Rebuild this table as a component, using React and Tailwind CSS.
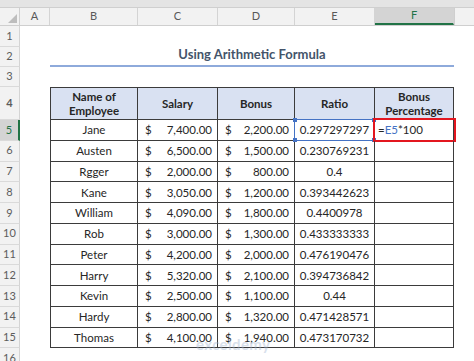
import React from 'react';

const cols = [
  { key: 'A', w: 'w-[30px]' },
  { key: 'B', w: 'w-[88px]' },
  { key: 'C', w: 'w-[80px]' },
  { key: 'D', w: 'w-[77px]' },
  { key: 'E', w: 'w-[80px]' },
  { key: 'F', w: 'w-[79px]' },
];

const rows = [
  ['Jane', '7,400.00', '2,200.00', '0.297297297'],
  ['Austen', '6,500.00', '1,500.00', '0.230769231'],
  ['Rgger', '2,000.00', '800.00', '0.4'],
  ['Kane', '3,050.00', '1,200.00', '0.393442623'],
  ['William', '4,090.00', '1,800.00', '0.4400978'],
  ['Rob', '3,000.00', '1,300.00', '0.433333333'],
  ['Peter', '4,200.00', '2,000.00', '0.476190476'],
  ['Harry', '5,320.00', '2,100.00', '0.394736842'],
  ['Kevin', '2,500.00', '1,100.00', '0.44'],
  ['Hardy', '2,800.00', '1,320.00', '0.471428571'],
  ['Thomas', '4,100.00', '1,940.00', '0.473170732'],
];

const RowHead = ({ n, active }) => (
  <div
    className={`w-[20px] shrink-0 flex items-center justify-center text-[11px] border-b border-[#dadada] ${
      active
        ? 'bg-[#d4d4d4] text-[#217346] border-r-2 border-r-[#217346]'
        : 'bg-[#f2f2f2] text-[#5c5c5c] border-r border-r-[#d4d4d4]'
    }`}
  >
    {n}
  </div>
);

const cellBase = 'shrink-0 border-r border-b border-[#3b3b3b] flex items-center';

function Money({ v, w }) {
  return (
    <div className={`${cellBase} ${w} justify-between pl-[7px] pr-[5px]`}>
      <span>$</span>
      <span>{v}</span>
    </div>
  );
}

function Corner({ cls }) {
  return <span className={`absolute w-[4px] h-[4px] bg-[#4472c4] ${cls}`} />;
}

export default function App() {
  return (
    <div
      className="w-[474px] h-[361px] overflow-hidden bg-white text-[#262626] relative"
      style={{ fontFamily: 'Lato, "Noto Sans", sans-serif' }}
    >
      {/* top strip */}
      <div className="h-[8px] bg-[#e4e4e4] border-b border-[#cfcfcf]" />

      {/* column headers */}
      <div className="flex h-[18px] bg-[#f2f2f2] border-b border-[#cfcfcf] text-[11px] text-[#595959]">
        <div className="w-[20px] shrink-0 border-r border-[#cfcfcf] relative">
          <svg className="absolute right-[2px] bottom-[2px]" width="9" height="9" viewBox="0 0 9 9">
            <polygon points="9,0 9,9 0,9" fill="#bdbdbd" />
          </svg>
        </div>
        {cols.map((c) => (
          <div
            key={c.key}
            className={`${c.w} shrink-0 flex items-center justify-center border-r border-[#d4d4d4] ${
              c.key === 'F' ? 'bg-[#d4d4d4] text-[#217346] border-b-2 border-b-[#217346]' : ''
            }`}
          >
            {c.key}
          </div>
        ))}
        <div className="flex-1 border-l border-[#cfcfcf]" />
      </div>

      {/* row 1 */}
      <div className="flex h-[21px]">
        <RowHead n={1} />
      </div>

      {/* row 2: title */}
      <div className="flex h-[20px]">
        <RowHead n={2} />
        <div className="w-[30px] shrink-0" />
        <div className="w-[404px] shrink-0 border-b-2 border-[#8eaadb] flex items-end justify-center pb-[1px] text-[13px] font-bold text-[#44546a]">
          Using Arithmetic Formula
        </div>
      </div>

      {/* row 3 */}
      <div className="flex h-[20px]">
        <RowHead n={3} />
      </div>

      {/* row 4: table header */}
      <div className="flex h-[33px] text-[11.5px] font-bold leading-[14px]">
        <RowHead n={4} />
        <div className="w-[30px] shrink-0" />
        <div className={`${cellBase} w-[88px] border-t border-l justify-center text-center bg-[#d9e1f2]`}>
          Name of<br />Employee
        </div>
        <div className={`${cellBase} w-[80px] border-t justify-center bg-[#d9e1f2]`}>Salary</div>
        <div className={`${cellBase} w-[77px] border-t justify-center bg-[#d9e1f2]`}>Bonus</div>
        <div className={`${cellBase} w-[80px] border-t justify-center bg-[#d9e1f2]`}>Ratio</div>
        <div className={`${cellBase} w-[79px] border-t justify-center text-center bg-[#d9e1f2]`}>
          Bonus<br />Percentage
        </div>
      </div>

      {/* data rows */}
      {rows.map((r, i) => (
        <div key={r[0]} className="flex h-[20.75px] text-[11.5px]">
          <RowHead n={i + 5} active={i === 0} />
          <div className="w-[30px] shrink-0" />
          <div className={`${cellBase} w-[88px] border-l justify-center`}>{r[0]}</div>
          <Money v={r[1]} w="w-[80px]" />
          <Money v={r[2]} w="w-[77px]" />
          <div className={`${cellBase} w-[80px] justify-center relative`}>
            {r[3]}
            {i === 0 && (
              <div className="absolute left-[-1px] top-[-1px] right-[-1px] bottom-[-1px] border border-[#4472c4]">
                <Corner cls="left-[-2px] top-[-2px]" />
                <Corner cls="right-[-2px] top-[-2px]" />
                <Corner cls="left-[-2px] bottom-[-2px]" />
                <Corner cls="right-[-2px] bottom-[-2px]" />
              </div>
            )}
          </div>
          <div className={`${cellBase} w-[79px] relative pl-[3px]`}>
            {i === 0 && (
              <>
                <span>=</span>
                <span className="text-[#4472c4]">E5</span>
                <span>*100</span>
                <div className="absolute left-[-2px] top-[-2px] right-[-3px] bottom-[-2px] border-[2.5px] border-[#e3161f]" />
              </>
            )}
          </div>
        </div>
      ))}

      {/* row 16 */}
      <div className="flex h-[20px]">
        <RowHead n={16} />
      </div>

      {/* watermark */}
      <div className="absolute left-[196px] top-[333px] text-[15px] font-bold text-[#9fb3cf] opacity-40 tracking-wide">
        exceldemy
      </div>
    </div>
  );
}
